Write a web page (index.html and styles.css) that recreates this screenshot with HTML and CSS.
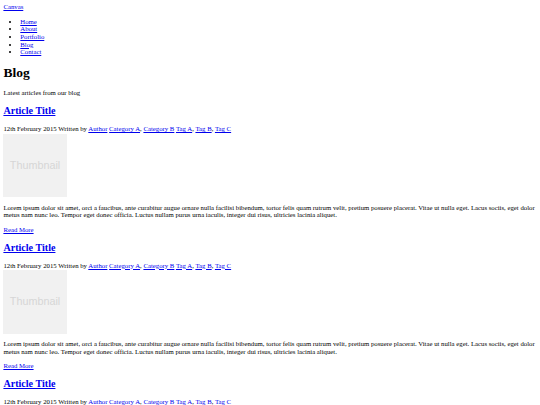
FILE: index.html
```html
<!DOCTYPE html>
<html>
<head>
<meta charset="utf-8">
<title>Blog</title>
<link rel="stylesheet" href="styles.css">
</head>
<body>
<header class="site-header">
<a href="#">Canvas</a>
<nav>
<ul class="nav-list">
<li><a href="#">Home</a></li>
<li><a href="#">About</a></li>
<li><a href="#">Portfolio</a></li>
<li><a href="#">Blog</a></li>
<li><a href="#">Contact</a></li>
</ul>
</nav>
</header>
<main>
<h1 class="page-title">Blog</h1>
<p class="text">Latest articles from our blog</p>

<article class="post">
<h2 class="post-title"><a href="#">Article Title</a></h2>
<div class="meta">12th February 2015 Written by <a href="#">Author</a> <a href="#">Category A</a>, <a href="#">Category B</a> <a href="#">Tag A</a>, <a href="#">Tag B</a>, <a href="#">Tag C</a></div>
<div class="thumb"><span>Thumbnail</span></div>
<p class="text">Lorem ipsum dolor sit amet, orci a faucibus, ante curabitur augue ornare nulla facilisi bibendum, tortor felis quam rutrum velit, pretium posuere placerat. Vitae ut nulla eget. Lacus sociis, eget dolor metus nam nunc leo. Tempor eget donec officia. Luctus nullam purus urna iaculis, integer dui risus, ultricies lacinia aliquet.</p>
<p class="text"><a href="#">Read More</a></p>
</article>

<article class="post">
<h2 class="post-title"><a href="#">Article Title</a></h2>
<div class="meta">12th February 2015 Written by <a href="#">Author</a> <a href="#">Category A</a>, <a href="#">Category B</a> <a href="#">Tag A</a>, <a href="#">Tag B</a>, <a href="#">Tag C</a></div>
<div class="thumb"><span>Thumbnail</span></div>
<p class="text">Lorem ipsum dolor sit amet, orci a faucibus, ante curabitur augue ornare nulla facilisi bibendum, tortor felis quam rutrum velit, pretium posuere placerat. Vitae ut nulla eget. Lacus sociis, eget dolor metus nam nunc leo. Tempor eget donec officia. Luctus nullam purus urna iaculis, integer dui risus, ultricies lacinia aliquet.</p>
<p class="text"><a href="#">Read More</a></p>
</article>

<article class="post">
<h2 class="post-title"><a href="#">Article Title</a></h2>
<div class="meta">12th February 2015 Written by <a href="#">Author</a> <a href="#">Category A</a>, <a href="#">Category B</a> <a href="#">Tag A</a>, <a href="#">Tag B</a>, <a href="#">Tag C</a></div>
<div class="thumb"><span>Thumbnail</span></div>
<p class="text">Lorem ipsum dolor sit amet, orci a faucibus, ante curabitur augue ornare nulla facilisi bibendum, tortor felis quam rutrum velit, pretium posuere placerat. Vitae ut nulla eget. Lacus sociis, eget dolor metus nam nunc leo. Tempor eget donec officia. Luctus nullam purus urna iaculis, integer dui risus, ultricies lacinia aliquet.</p>
<p class="text"><a href="#">Read More</a></p>
</article>
</main>
</body>
</html>
```

FILE: styles.css
```css
html {
  overflow: hidden;
}
body {
  margin: 3.4px;
  font-family: "Liberation Serif", "Times New Roman", serif;
  font-size: 6.75px;
  line-height: 7.6px;
  color: #000;
}
a {
  color: #0000ee;
}
.nav-list {
  margin: 6.75px 0;
  padding-left: 16.9px;
}
.page-title {
  font-size: 13.5px;
  line-height: 15.5px;
  margin: 9px 0;
}
.text {
  margin: 6.75px 0;
}
.post-title {
  font-size: 10.1px;
  line-height: 11.6px;
  margin: 8.4px 0;
}
.thumb {
  width: 63.3px;
  height: 63.3px;
  margin: 1px 0 2.5px;
  background: #f1f1f1;
  display: flex;
  align-items: center;
  justify-content: center;
}
.thumb span {
  font-family: "Liberation Sans", Arial, sans-serif;
  font-size: 10.8px;
  color: #d6d6d6;
}
```
